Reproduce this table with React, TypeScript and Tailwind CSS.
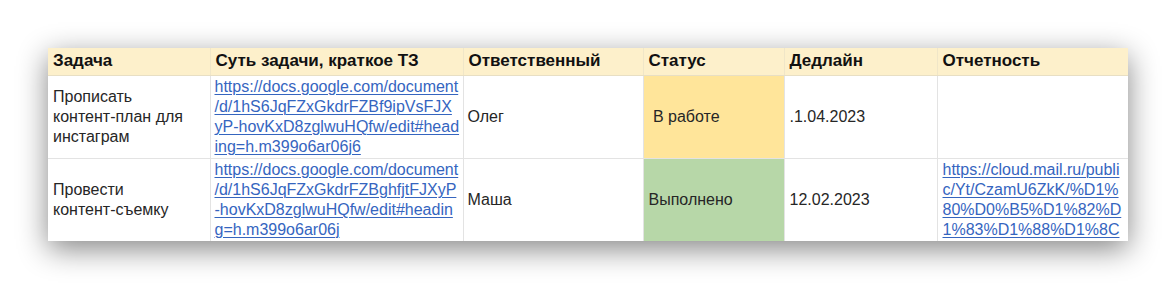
const link = 'text-[#3565bf] underline decoration-1 underline-offset-[2px]';

const rows = [
  {
    task: ['Прописать', 'контент-план для', 'инстаграм'],
    brief: [
      'https://docs.google.com/document',
      '/d/1hS6JqFZxGkdrFZBf9ipVsFJX',
      'yP-hovKxD8zglwuHQfw/edit#head',
      'ing=h.m399o6ar06j6',
    ],
    owner: 'Олег',
    status: '\u00a0В работе',
    statusBg: 'bg-[#ffe59a]',
    deadline: '.1.04.2023',
    report: [] as string[],
  },
  {
    task: ['Провести', 'контент-съемку'],
    brief: [
      'https://docs.google.com/document',
      '/d/1hS6JqFZxGkdrFZBghfjtFJXyP',
      '-hovKxD8zglwuHQfw/edit#headin',
      'g=h.m399o6ar06j',
    ],
    owner: 'Маша',
    status: 'Выполнено',
    statusBg: 'bg-[#b7d7a8]',
    deadline: '12.02.2023',
    report: [
      'https://cloud.mail.ru/publi',
      'c/Yt/CzamU6ZkK/%D1%',
      '80%D0%B5%D1%82%D',
      '1%83%D1%88%D1%8C',
    ],
  },
];

const headers = ['Задача', 'Суть задачи, краткое ТЗ', 'Ответственный', 'Статус', 'Дедлайн', 'Отчетность'];
const widths = ['w-[162px]', 'w-[253px]', 'w-[180px]', 'w-[141px]', 'w-[153px]', 'w-[191px]'];

const Lines = ({ lines, className = '' }: { lines: string[]; className?: string }) => (
  <div className={className}>
    {lines.map((l) => (
      <div key={l} className="whitespace-nowrap">
        {l}
      </div>
    ))}
  </div>
);

export default function App() {
  return (
    <div className="w-[1176px] h-[291px] bg-white pt-[48px] pl-[48px] font-['Liberation_Sans',Arial,sans-serif] text-[16px] leading-[20px] text-[#262626]">
      <table className="table-fixed border-collapse w-[1080px] bg-white shadow-[0_8px_28px_rgba(0,0,0,0.48)]">
        <colgroup>
          {widths.map((w) => (
            <col key={w} className={w} />
          ))}
        </colgroup>
        <thead>
          <tr className="h-[27px] bg-[#fdf0cb]">
            {headers.map((h, i) => (
              <th
                key={h}
                className={`text-left text-[17px] font-bold text-[#111] pl-[5px] align-middle border-b border-[#e8dfc4] ${
                  i > 0 ? 'border-l border-l-[#f0e6c8]' : ''
                }`}
              >
                {h}
              </th>
            ))}
          </tr>
        </thead>
        <tbody>
          {rows.map((r, idx) => (
            <tr key={idx} className={`h-[83px] ${idx === 0 ? 'border-b border-[#e3e3e3]' : ''}`}>
              <td className="pl-[5px] align-middle">
                <Lines lines={r.task} />
              </td>
              <td className="pl-[4px] align-middle border-l border-[#e3e3e3]">
                <Lines lines={r.brief} className={link} />
              </td>
              <td className="pl-[4px] align-middle border-l border-[#e3e3e3]">{r.owner}</td>
              <td className={`pl-[5px] align-middle border-l border-[#e3e3e3] ${r.statusBg}`}>{r.status}</td>
              <td className="pl-[5px] align-middle border-l border-[#e3e3e3]">{r.deadline}</td>
              <td className="pl-[5px] align-middle border-l border-[#e3e3e3]">
                <Lines lines={r.report} className={link} />
              </td>
            </tr>
          ))}
        </tbody>
      </table>
    </div>
  );
}
